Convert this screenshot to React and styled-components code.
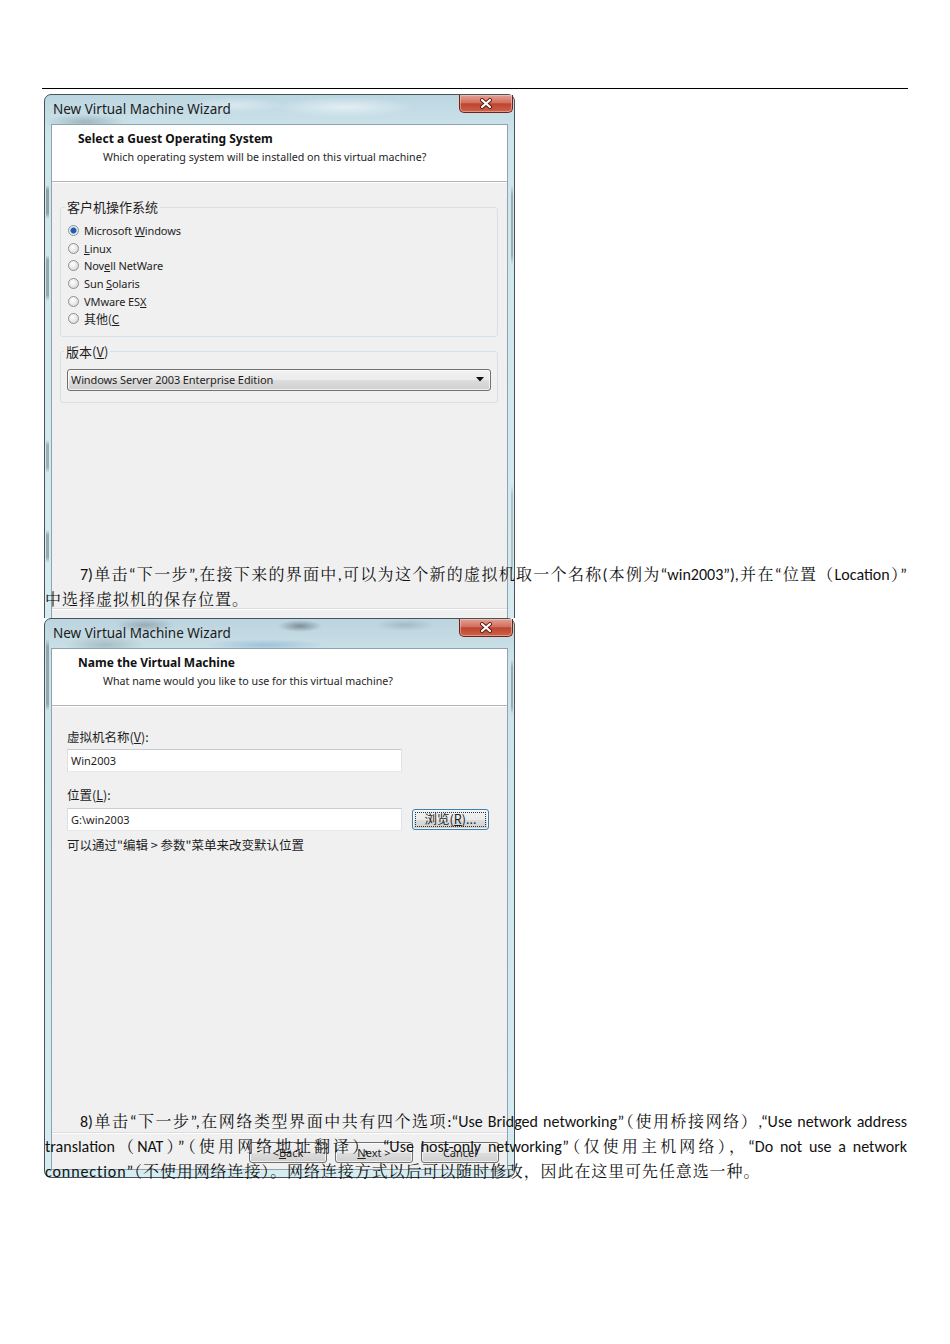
import React from 'react';
import styled, { createGlobalStyle } from 'styled-components';

const UI = `"Noto Sans", "Noto Sans CJK SC", sans-serif`;
const CJK = `"Noto Sans CJK SC", "Noto Sans", sans-serif`;
const DOC = `"Carlito", "Lato", "Noto Serif CJK SC", "Noto Sans CJK SC", sans-serif`;

const GlobalStyle = createGlobalStyle`
  html, body { margin: 0; padding: 0; background: #fff; }
  body { font-family: ${UI}; color: #1e1e1e; }
  * { box-sizing: border-box; }
`;

const Page = styled.div`
  width: 950px;
  height: 1344px;
  display: grid;
  grid-template: 1fr / 1fr;
  overflow: hidden;
`;

const FigureLayer = styled.div`
  grid-area: 1 / 1;
  padding: 94px 0 0 44px;
  display: flex;
  flex-direction: column;
  align-items: flex-start;
`;

const TextLayer = styled.div`
  grid-area: 1 / 1;
  position: relative;
  padding: 88px 0 0 42px;
`;

const Rule = styled.div`
  width: 866px;
  border-top: 1px solid #000;
`;

const Para = styled.div`
  margin: ${p => p.$top}px 0 0 3px;
  width: 862px;
  font-family: ${DOC};
  font-size: 16px;
  line-height: 25px;
  color: #111;
`;

const Line = styled.div`
  white-space: nowrap;
  text-align: ${p => (p.$justify ? 'justify' : 'left')};
  text-align-last: ${p => (p.$justify ? 'justify' : 'left')};
  text-justify: ${p => p.$words ? 'inter-word' : 'auto'};
  text-indent: ${p => (p.$indent ? 35 : 0)}px;
  letter-spacing: ${p => p.$spacing || 0}px;
`;

/* ---------- wizard window ---------- */

const Clip = styled.div`
  height: ${p => p.$height}px;
  overflow: hidden;
`;

const WindowFrame = styled.div`
  width: 471px;
  height: 560px;
  border: 1px solid #46535b;
  border-radius: 7px;
  padding: 0 6px 7px;
  display: flex;
  flex-direction: column;
  background: ${p => p.$glass};
`;

const TitleBar = styled.div`
  height: 29px;
  display: flex;
  justify-content: space-between;
  align-items: flex-start;
`;

const Title = styled.span`
  margin: 5px 0 0 2px;
  font: 13.5px/18px ${UI};
  color: #1b1b1b;
`;

const CloseButton = styled.div`
  width: 54px;
  height: 18px;
  margin-right: -5px;
  border: 1px solid #6a2519;
  border-top: none;
  border-radius: 0 0 5px 5px;
  background: linear-gradient(#e3a194, #d3705f 45%, #bf4430 52%, #cc6249 100%);
  box-shadow: inset 0 0 0 1px rgba(255, 220, 210, 0.45);
  display: flex;
  align-items: center;
  justify-content: center;
`;

const Client = styled.div`
  flex: 1;
  display: flex;
  flex-direction: column;
  border: 1px solid #8ea3ae;
  background: #f0f0f0;
`;

const Header = styled.div`
  height: 57px;
  background: #fff;
  border-bottom: 1px solid #b4b4b4;
  box-shadow: 0 1px 0 #fff;
  padding: 6px 0 0 26px;
`;

const Heading = styled.div`
  font: 700 12px/16px ${UI};
  color: #111;
`;

const SubHeading = styled.div`
  margin: 2px 0 0 25px;
  font: 10.7px/16px ${UI};
  color: #1e1e1e;
`;

const Body = styled.div`
  flex: 1;
  display: flex;
  flex-direction: column;
  padding: ${p => p.$pad || '0'};
`;

const Footer = styled.div`
  height: 37px;
  border-top: 1px solid #dcdcdc;
  box-shadow: inset 0 1px 0 #fff;
  display: flex;
  justify-content: flex-end;
  gap: 8px;
  padding: 9px 8px 0 0;
`;

const PushButton = styled.div`
  width: ${p => p.$width || 78}px;
  height: 21px;
  border: 1px solid ${p => (p.$focused ? '#3c7fb1' : '#707070')};
  border-radius: 3px;
  background: linear-gradient(#f2f2f2, #ebebeb 50%, #dddddd 51%, #cfcfcf);
  box-shadow: inset 0 0 0 1px rgba(255, 255, 255, 0.7);
  display: flex;
  align-items: center;
  justify-content: center;
  font: ${p => (p.$cjk ? `12.5px/1 ${CJK}` : `11px/1 ${UI}`)};
  color: #1e1e1e;
  outline: ${p => (p.$focused ? '1px dotted #333' : 'none')};
  outline-offset: -4px;
`;

const Key = styled.span`
  text-decoration: underline;
  text-underline-offset: 1px;
`;

const GroupBox = styled.fieldset`
  margin: ${p => p.$top}px 9px 0 8px;
  padding: ${p => p.$pad};
  border: 1px solid #d5dfe5;
  border-radius: 3px;
  min-width: 0;
`;

const Legend = styled.legend`
  padding: 0 2px;
  margin-left: -3px;
  font: 13px/18px ${CJK};
  color: #1e1e1e;
`;

const RadioRow = styled.div`
  height: 17.6px;
  display: flex;
  align-items: center;
  gap: 5px;
  font: ${p => (p.$cjk ? `12px/1 ${CJK}` : `11px/1 ${UI}`)};
  color: #1e1e1e;
  letter-spacing: -0.1px;
`;

const RadioDot = styled.span`
  width: 11px;
  height: 11px;
  flex: none;
  border-radius: 50%;
  border: 1px solid #8a9096;
  background: ${p =>
    p.$checked
      ? 'radial-gradient(circle, #1f5aa6 0 2.2px, #5d93d0 2.8px, #d8e6f4 3.6px, #f4f4f4 4.5px)'
      : 'radial-gradient(circle at 40% 35%, #ffffff, #e6e6e6 55%, #cdcdcd)'};
`;

const Dropdown = styled.div`
  height: 22px;
  border: 1px solid #707070;
  border-radius: 3px;
  background: linear-gradient(#f2f2f2, #ebebeb 50%, #dddddd 51%, #cfcfcf);
  box-shadow: inset 0 0 0 1px rgba(255, 255, 255, 0.7);
  display: flex;
  align-items: center;
  justify-content: space-between;
  padding: 0 6px 0 3px;
  font: 11px/1 ${UI};
  color: #1e1e1e;
  letter-spacing: -0.1px;
`;

const FieldLabel = styled.div`
  margin-top: ${p => p.$top || 0}px;
  font: 12.5px/18px ${CJK};
  color: #1e1e1e;
`;

const FieldRow = styled.div`
  margin-top: ${p => p.$top || 0}px;
  display: flex;
  align-items: center;
  gap: 10px;
`;

const TextBox = styled.div`
  width: 335px;
  height: 23px;
  border: 1px solid;
  border-color: #c9ccd4 #e2e3ea #e3e9ef #dbdfe6;
  background: #fff;
  display: flex;
  align-items: center;
  padding-left: 3px;
  font: 11px/1 ${UI};
  color: #1e1e1e;
`;

const Note = styled.div`
  margin-top: 5px;
  font: 12.5px/18px ${CJK};
  color: #1e1e1e;
`;

const CloseGlyph = () => (
  <svg width="14" height="11" viewBox="0 0 14 11">
    <path d="M3 2 L11 9 M11 2 L3 9" stroke="#5b1a10" strokeWidth="4" strokeLinecap="round" />
    <path d="M3 2 L11 9 M11 2 L3 9" stroke="#fff" strokeWidth="2.2" strokeLinecap="round" />
  </svg>
);

const ArrowGlyph = () => (
  <svg width="8" height="5" viewBox="0 0 8 5">
    <path d="M0 0 H8 L4 4.5 Z" fill="#111" />
  </svg>
);

const glassOne = `
  linear-gradient(to right, transparent 0 1px, rgba(255,255,255,0) 1px) left top / 3px 100% no-repeat,
  linear-gradient(rgba(90,105,112,0) 0 90px, rgba(90,105,112,.55) 95px 118px, rgba(90,105,112,0) 124px 160px,
    rgba(90,105,112,.5) 165px 200px, rgba(90,105,112,0) 206px 345px, rgba(90,105,112,.45) 350px 372px,
    rgba(90,105,112,0) 378px 435px, rgba(90,105,112,.5) 440px 462px, rgba(90,105,112,0) 468px)
    1px top / 3px 100% no-repeat,
  linear-gradient(rgba(90,105,112,0) 0 90px, rgba(90,105,112,.45) 100px 160px, rgba(90,105,112,0) 170px 390px,
    rgba(90,105,112,.3) 400px 470px, rgba(90,105,112,0) 480px)
    right 1px top / 2px 100% no-repeat,
  radial-gradient(ellipse 70px 10px at 300px 12px, rgba(255,255,255,.55), transparent),
  radial-gradient(ellipse 50px 8px at 190px 10px, rgba(255,255,255,.4), transparent),
  radial-gradient(ellipse 40px 8px at 40px 27px, rgba(110,130,140,.45), transparent),
  linear-gradient(#bcd6e1, #cfe5ec 40px, #d6ecf1)`;

const glassTwo = `
  linear-gradient(rgba(90,105,112,0) 0 20px, rgba(90,105,112,.5) 28px 85px, rgba(90,105,112,0) 92px)
    1px top / 3px 100% no-repeat,
  linear-gradient(rgba(90,105,112,0) 0 40px, rgba(90,105,112,.45) 48px 88px, rgba(90,105,112,0) 95px)
    right 1px top / 2px 100% no-repeat,
  radial-gradient(ellipse 30px 7px at 100px 6px, rgba(80,90,100,.35), transparent),
  radial-gradient(ellipse 22px 6px at 255px 7px, rgba(60,70,80,.5), transparent),
  radial-gradient(ellipse 30px 6px at 360px 6px, rgba(90,100,110,.25), transparent),
  radial-gradient(ellipse 60px 6px at 220px 26px, rgba(90,140,190,.35), transparent),
  radial-gradient(ellipse 40px 10px at 60px 26px, rgba(110,130,140,.35), transparent),
  linear-gradient(#bcd4de, #cde3eb 40px, #d6ecf1)`;

function WizardWindow({ glass, heading, subheading, bodyPad, showButtons = true, children }) {
  return (
    <WindowFrame $glass={glass}>
      <TitleBar>
        <Title>New Virtual Machine Wizard</Title>
        <CloseButton>
          <CloseGlyph />
        </CloseButton>
      </TitleBar>
      <Client>
        <Header>
          <Heading>{heading}</Heading>
          <SubHeading>{subheading}</SubHeading>
        </Header>
        <Body $pad={bodyPad}>{children}</Body>
        <Footer>
          {showButtons && (
            <>
              <PushButton>
                &lt; <Key>B</Key>ack
              </PushButton>
              <PushButton>
                <Key>N</Key>ext &gt;
              </PushButton>
              <PushButton>Cancel</PushButton>
            </>
          )}
        </Footer>
      </Client>
    </WindowFrame>
  );
}

const osList = [
  { label: <>Microsoft <Key>W</Key>indows</>, checked: true },
  { label: <><Key>L</Key>inux</> },
  { label: <>Nov<Key>e</Key>ll NetWare</> },
  { label: <>Sun <Key>S</Key>olaris</> },
  { label: <>VMware ES<Key>X</Key></> },
  { label: <>其他(<Key>C</Key></>, cjk: true },
];

export default function App() {
  return (
    <Page>
      <GlobalStyle />
      <FigureLayer>
        {/* the lower edge of the first shot sits under the second one */}
        <Clip $height={524}>
          <WizardWindow
            glass={glassOne}
            heading="Select a Guest Operating System"
            subheading="Which operating system will be installed on this virtual machine?"
            showButtons={false}
          >
            <GroupBox $top={16} $pad="6px 7px 8px">
              <Legend>客户机操作系统</Legend>
              {osList.map((os, i) => (
                <RadioRow key={i} $cjk={os.cjk}>
                  <RadioDot $checked={os.checked} />
                  <span>{os.label}</span>
                </RadioRow>
              ))}
            </GroupBox>
            <GroupBox $top={6} $pad="8px 6px 11px">
              <Legend>
                版本(<Key>V</Key>)
              </Legend>
              <Dropdown>
                <span>Windows Server 2003 Enterprise Edition</span>
                <ArrowGlyph />
              </Dropdown>
            </GroupBox>
          </WizardWindow>
        </Clip>
        <WizardWindow
          glass={glassTwo}
          heading="Name the Virtual Machine"
          subheading="What name would you like to use for this virtual machine?"
          bodyPad="22px 0 0 15px"
        >
          <FieldLabel>
            虚拟机名称(<Key>V</Key>):
          </FieldLabel>
          <FieldRow $top={3}>
            <TextBox>Win2003</TextBox>
          </FieldRow>
          <FieldLabel $top={14}>
            位置(<Key>L</Key>):
          </FieldLabel>
          <FieldRow $top={4}>
            <TextBox>G:\win2003</TextBox>
            <PushButton $width={77} $focused $cjk>
              浏览(<Key>R</Key>)...
            </PushButton>
          </FieldRow>
          <Note>可以通过"编辑 &gt; 参数"菜单来改变默认位置</Note>
        </WizardWindow>
      </FigureLayer>

      <TextLayer>
        <Rule />
        <Para $top={473}>
          <Line $justify $indent>
            7)单击“下一步”,在接下来的界面中,可以为这个新的虚拟机取一个名称(本例为“win2003”),并在“位置（Location）”
          </Line>
          <Line $spacing={1}>中选择虚拟机的保存位置。</Line>
        </Para>
        <Para $top={497}>
          <Line $justify $indent>
            8)单击“下一步”,在网络类型界面中共有四个选项:“Use Bridged networking”（使用桥接网络）,“Use network address
          </Line>
          <Line $justify $words>
            translation（NAT）”（使用网络地址翻译），“Use host-only networking”（仅使用主机网络），“Do not use a network
          </Line>
          <Line $spacing={0.9}>connection”（不使用网络连接）。网络连接方式以后可以随时修改，因此在这里可先任意选一种。</Line>
        </Para>
      </TextLayer>
    </Page>
  );
}
